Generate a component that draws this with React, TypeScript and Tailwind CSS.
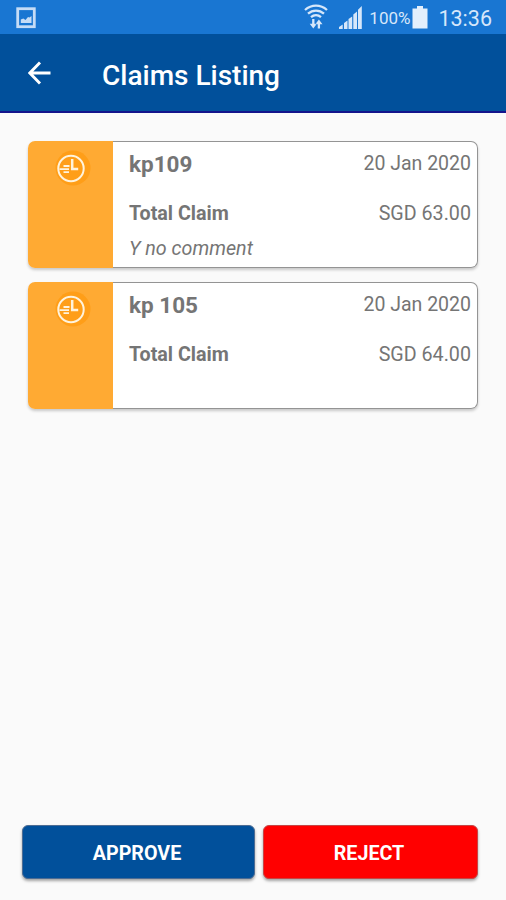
interface Claim {
  id: string;
  date: string;
  amount: string;
  comment?: string;
}

const CLAIMS: Claim[] = [
  { id: 'kp109', date: '20 Jan 2020', amount: 'SGD 63.00', comment: 'Y no comment' },
  { id: 'kp 105', date: '20 Jan 2020', amount: 'SGD 64.00' },
];

function PictureIcon() {
  return (
    <svg width="20" height="22" viewBox="0 0 20 22" fill="none">
      <rect x="1.7" y="1.7" width="16.6" height="18" stroke="#c5dcf6" strokeWidth="2.8" />
      <path d="M4.800 16v-3.500l2.500-1 2.200 1.500 2.500-3 1.500.5L15.500 9v7z" fill="#c5dcf6" />
    </svg>
  );
}

function WifiIcon() {
  return (
    <svg width="24" height="26" viewBox="0 0 24 26" fill="none" stroke="#d6e7fa" strokeWidth="2.300">
      <path d="M1 6C7.500 .2 16.500 .2 23 6" />
      <path d="M4 9.700C8.700 5.500 15.300 5.500 20 9.700" />
      <path d="M7 13.200c3-2.600 7-2.600 10 0" />
      <path d="M9.300 15v7M14.900 24.500v-6" />
      <path d="M5.700 19.800h7.200l-3.600 4.700zM11.300 20.200h7.200l-3.600-4.700z" fill="#d6e7fa" stroke="none" />
    </svg>
  );
}

function SignalIcon() {
  return (
    <svg width="23" height="23" viewBox="0 0 23 23" fill="#d6e7fa">
      <path d="M0 23v-2l3.700-2.500V23zM5 23v-6l3.500-2.500V23zM9.500 23V13l3.700-2.600V23zM14.300 23V8.500l3.700-3V23zM19 23V3.800L22.800 0v23z" />
    </svg>
  );
}

function BatteryIcon() {
  return (
    <svg width="16" height="23" viewBox="0 0 16 23" fill="#e3effc">
      <path d="M5 0h6v2.500h4.500V22.500H.5V2.500H5z" />
    </svg>
  );
}

function ClockIcon() {
  return (
    <svg width="40" height="40" viewBox="0 0 40 40" fill="none" stroke="#fff3dc">
      <circle cx="22" cy="20" r="17.500" fill="#ff9e18" stroke="none" />
      <circle cx="20" cy="20.500" r="12.700" strokeWidth="2" />
      <path d="M21.200 11v10h6" strokeWidth="2.500" />
      <path d="M12.500 18h6M8.500 21.200h9.500M12.500 24.200h5.500" strokeWidth="1.800" />
    </svg>
  );
}

function StatusBar() {
  return (
    <div className="flex h-[34px] shrink-0 items-start bg-[#1976d2] pl-4 pr-[14px] text-[#d6e7fa]">
      <div className="pt-[7px]">
        <PictureIcon />
      </div>
      <div className="ml-auto flex items-start">
        <div className="pt-1">
          <WifiIcon />
        </div>
        <div className="ml-[11px] pt-1.5">
          <SignalIcon />
        </div>
        <span className="ml-[7px] pt-1.5 text-[17px] leading-6">100%</span>
        <div className="ml-[2px] pt-1.5">
          <BatteryIcon />
        </div>
        <span className="ml-[10px] pt-[5px] text-[21.5px] leading-7">13:36</span>
      </div>
    </div>
  );
}

function Header() {
  return (
    <header className="flex h-[79px] shrink-0 items-center border-b-2 border-[#14148c] bg-[#01509b] pl-7 text-white">
      <svg width="23" height="24" viewBox="0 0 23 24" fill="none" stroke="currentColor" strokeWidth="2.900">
        <path d="M22.500 12H2M12 1.500L1.800 12 12 22.500" />
      </svg>
      <h1 className="ml-[51px] pt-1.5 text-[28px] font-medium leading-8">Claims Listing</h1>
    </header>
  );
}

function ClaimCard({ claim }: { claim: Claim }) {
  return (
    <article className="flex h-[127px] rounded-[7px] text-[#757575] shadow-[0_2px_3px_rgba(0,0,0,0.2)]">
      <div className="flex w-[85px] shrink-0 justify-center rounded-l-[7px] bg-[#ffaa33] pt-[7px]">
        <ClockIcon />
      </div>
      <div className="flex-1 rounded-r-[7px] border-y border-r border-[#949494] bg-white pl-4 pr-1.5 pt-1.5">
        <div className="flex justify-between">
          <span className="text-[22.5px] font-bold leading-8">{claim.id}</span>
          <span className="text-[19.5px] leading-[31px]">{claim.date}</span>
        </div>
        <div className="mt-[19px] flex justify-between text-[19.7px] leading-[30px]">
          <span className="font-bold">Total Claim</span>
          <span>{claim.amount}</span>
        </div>
        {claim.comment && <p className="mt-[5px] text-[19.7px] italic leading-[30px]">{claim.comment}</p>}
      </div>
    </article>
  );
}

export default function App() {
  return (
    <div className="flex h-[900px] w-[506px] flex-col overflow-hidden bg-[#fafafa] font-['Roboto',sans-serif]">
      <StatusBar />
      <Header />
      <main className="flex flex-1 flex-col gap-[14px] px-7 pt-7">
        {CLAIMS.map((claim) => (
          <ClaimCard key={claim.id} claim={claim} />
        ))}
      </main>
      <footer className="mb-[21px] ml-[22px] mr-7 flex h-[54px] shrink-0 gap-2 text-[19.7px] font-bold text-white">
        <button className="w-[233px] rounded-[6px] border border-[#4d6c93] bg-[#01509b] pr-[3px] pt-[3px] shadow-[0_2px_3px_rgba(0,0,0,0.35)]">
          APPROVE
        </button>
        <button className="flex-1 rounded-[6px] border border-[#c54545] bg-[#ff0000] pr-[3px] pt-[3px] shadow-[0_2px_3px_rgba(0,0,0,0.35)]">
          REJECT
        </button>
      </footer>
    </div>
  );
}
